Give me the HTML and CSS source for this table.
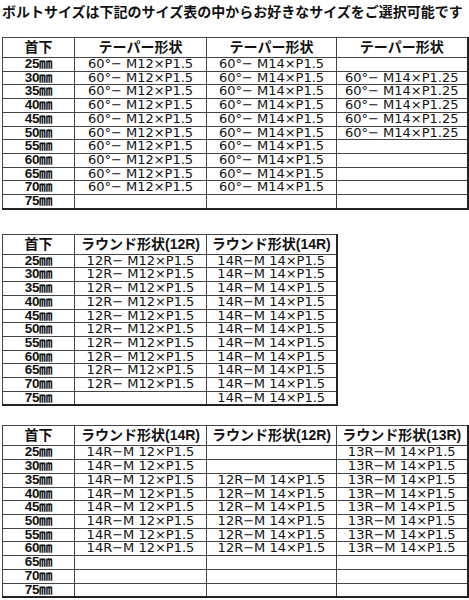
FILE: index.html
```html
<!DOCTYPE html>
<html lang="ja">
<head>
<meta charset="utf-8">
<link rel="stylesheet" href="styles.css">
</head>
<body>
<div class="page">
  <h1 class="title">ボルトサイズは下記のサイズ表の中からお好きなサイズをご選択可能です</h1>

  <table class="spec spec-4 first">
    <colgroup><col class="c1"><col class="c2"><col class="c3"><col class="c4"></colgroup>
    <tr class="head"><th>首下</th><th>テーパー形状</th><th>テーパー形状</th><th>テーパー形状</th></tr>
    <tr><td class="len">25㎜</td><td>60°− M12×P1.5</td><td>60°− M14×P1.5</td><td></td></tr>
    <tr><td class="len">30㎜</td><td>60°− M12×P1.5</td><td>60°− M14×P1.5</td><td>60°− M14×P1.25</td></tr>
    <tr><td class="len">35㎜</td><td>60°− M12×P1.5</td><td>60°− M14×P1.5</td><td>60°− M14×P1.25</td></tr>
    <tr><td class="len">40㎜</td><td>60°− M12×P1.5</td><td>60°− M14×P1.5</td><td>60°− M14×P1.25</td></tr>
    <tr><td class="len">45㎜</td><td>60°− M12×P1.5</td><td>60°− M14×P1.5</td><td>60°− M14×P1.25</td></tr>
    <tr><td class="len">50㎜</td><td>60°− M12×P1.5</td><td>60°− M14×P1.5</td><td>60°− M14×P1.25</td></tr>
    <tr><td class="len">55㎜</td><td>60°− M12×P1.5</td><td>60°− M14×P1.5</td><td></td></tr>
    <tr><td class="len">60㎜</td><td>60°− M12×P1.5</td><td>60°− M14×P1.5</td><td></td></tr>
    <tr><td class="len">65㎜</td><td>60°− M12×P1.5</td><td>60°− M14×P1.5</td><td></td></tr>
    <tr><td class="len">70㎜</td><td>60°− M12×P1.5</td><td>60°− M14×P1.5</td><td></td></tr>
    <tr><td class="len">75㎜</td><td></td><td></td><td></td></tr>
  </table>

  <table class="spec spec-3 second">
    <colgroup><col class="c1"><col class="c2"><col class="c3"></colgroup>
    <tr class="head"><th>首下</th><th>ラウンド形状(12R)</th><th>ラウンド形状(14R)</th></tr>
    <tr><td class="len">25㎜</td><td>12R− M12×P1.5</td><td>14R−M 14×P1.5</td></tr>
    <tr><td class="len">30㎜</td><td>12R− M12×P1.5</td><td>14R−M 14×P1.5</td></tr>
    <tr><td class="len">35㎜</td><td>12R− M12×P1.5</td><td>14R−M 14×P1.5</td></tr>
    <tr><td class="len">40㎜</td><td>12R− M12×P1.5</td><td>14R−M 14×P1.5</td></tr>
    <tr><td class="len">45㎜</td><td>12R− M12×P1.5</td><td>14R−M 14×P1.5</td></tr>
    <tr><td class="len">50㎜</td><td>12R− M12×P1.5</td><td>14R−M 14×P1.5</td></tr>
    <tr><td class="len">55㎜</td><td>12R− M12×P1.5</td><td>14R−M 14×P1.5</td></tr>
    <tr><td class="len">60㎜</td><td>12R− M12×P1.5</td><td>14R−M 14×P1.5</td></tr>
    <tr><td class="len">65㎜</td><td>12R− M12×P1.5</td><td>14R−M 14×P1.5</td></tr>
    <tr><td class="len">70㎜</td><td>12R− M12×P1.5</td><td>14R−M 14×P1.5</td></tr>
    <tr><td class="len">75㎜</td><td></td><td>14R−M 14×P1.5</td></tr>
  </table>

  <table class="spec spec-4 third">
    <colgroup><col class="c1"><col class="c2"><col class="c3"><col class="c4"></colgroup>
    <tr class="head"><th>首下</th><th>ラウンド形状(14R)</th><th>ラウンド形状(12R)</th><th>ラウンド形状(13R)</th></tr>
    <tr><td class="len">25㎜</td><td>14R−M 12×P1.5</td><td></td><td>13R−M 14×P1.5</td></tr>
    <tr><td class="len">30㎜</td><td>14R−M 12×P1.5</td><td></td><td>13R−M 14×P1.5</td></tr>
    <tr><td class="len">35㎜</td><td>14R−M 12×P1.5</td><td>12R−M 14×P1.5</td><td>13R−M 14×P1.5</td></tr>
    <tr><td class="len">40㎜</td><td>14R−M 12×P1.5</td><td>12R−M 14×P1.5</td><td>13R−M 14×P1.5</td></tr>
    <tr><td class="len">45㎜</td><td>14R−M 12×P1.5</td><td>12R−M 14×P1.5</td><td>13R−M 14×P1.5</td></tr>
    <tr><td class="len">50㎜</td><td>14R−M 12×P1.5</td><td>12R−M 14×P1.5</td><td>13R−M 14×P1.5</td></tr>
    <tr><td class="len">55㎜</td><td>14R−M 12×P1.5</td><td>12R−M 14×P1.5</td><td>13R−M 14×P1.5</td></tr>
    <tr><td class="len">60㎜</td><td>14R−M 12×P1.5</td><td>12R−M 14×P1.5</td><td>13R−M 14×P1.5</td></tr>
    <tr><td class="len">65㎜</td><td></td><td></td><td></td></tr>
    <tr><td class="len">70㎜</td><td></td><td></td><td></td></tr>
    <tr><td class="len">75㎜</td><td></td><td></td><td></td></tr>
  </table>
</div>
</body>
</html>
```

FILE: styles.css
```css
html, body {
  margin: 0;
  padding: 0;
  background: #fff;
}

.page {
  padding: 0 0 0 2px;
  font-family: "Liberation Sans", "Noto Sans CJK JP", sans-serif;
  color: #111;
}

.title {
  margin: 0;
  padding-top: 4px;
  height: 17px;
  font-size: 14px;
  line-height: 17px;
  font-weight: bold;
  white-space: nowrap;
}

.spec {
  border-collapse: collapse;
  table-layout: fixed;
  border-top: 1px solid #333;
  border-left: 1px solid #333;
  border-right: 2px solid #222;
  border-bottom: 2px solid #222;
}

.spec-4 { width: 465px; }
.spec-3 { width: 335px; }

.first { margin-top: 16px; }
.second { margin-top: 24px; }
.third { margin-top: 19px; }

.c1 { width: 72px; }
.c2 { width: 132px; }
.c3 { width: 130px; }
.c4 { width: 131px; }

.spec th,
.spec td {
  border: 1px solid #444;
  padding: 0;
  text-align: center;
  white-space: nowrap;
}

.spec th {
  height: 19px;
  font-size: 14px;
  line-height: 19px;
  font-weight: bold;
}

.spec td {
  height: 12.7px;
  font-family: "DejaVu Sans", "Liberation Sans", "Noto Sans CJK JP", sans-serif;
  font-size: 13px;
  line-height: 12.7px;
  font-weight: normal;
}

.spec td.len {
  font-family: "Liberation Sans", "Noto Sans CJK JP", sans-serif;
  font-weight: bold;
  font-size: 13.5px;
  letter-spacing: -0.3px;
}
```
